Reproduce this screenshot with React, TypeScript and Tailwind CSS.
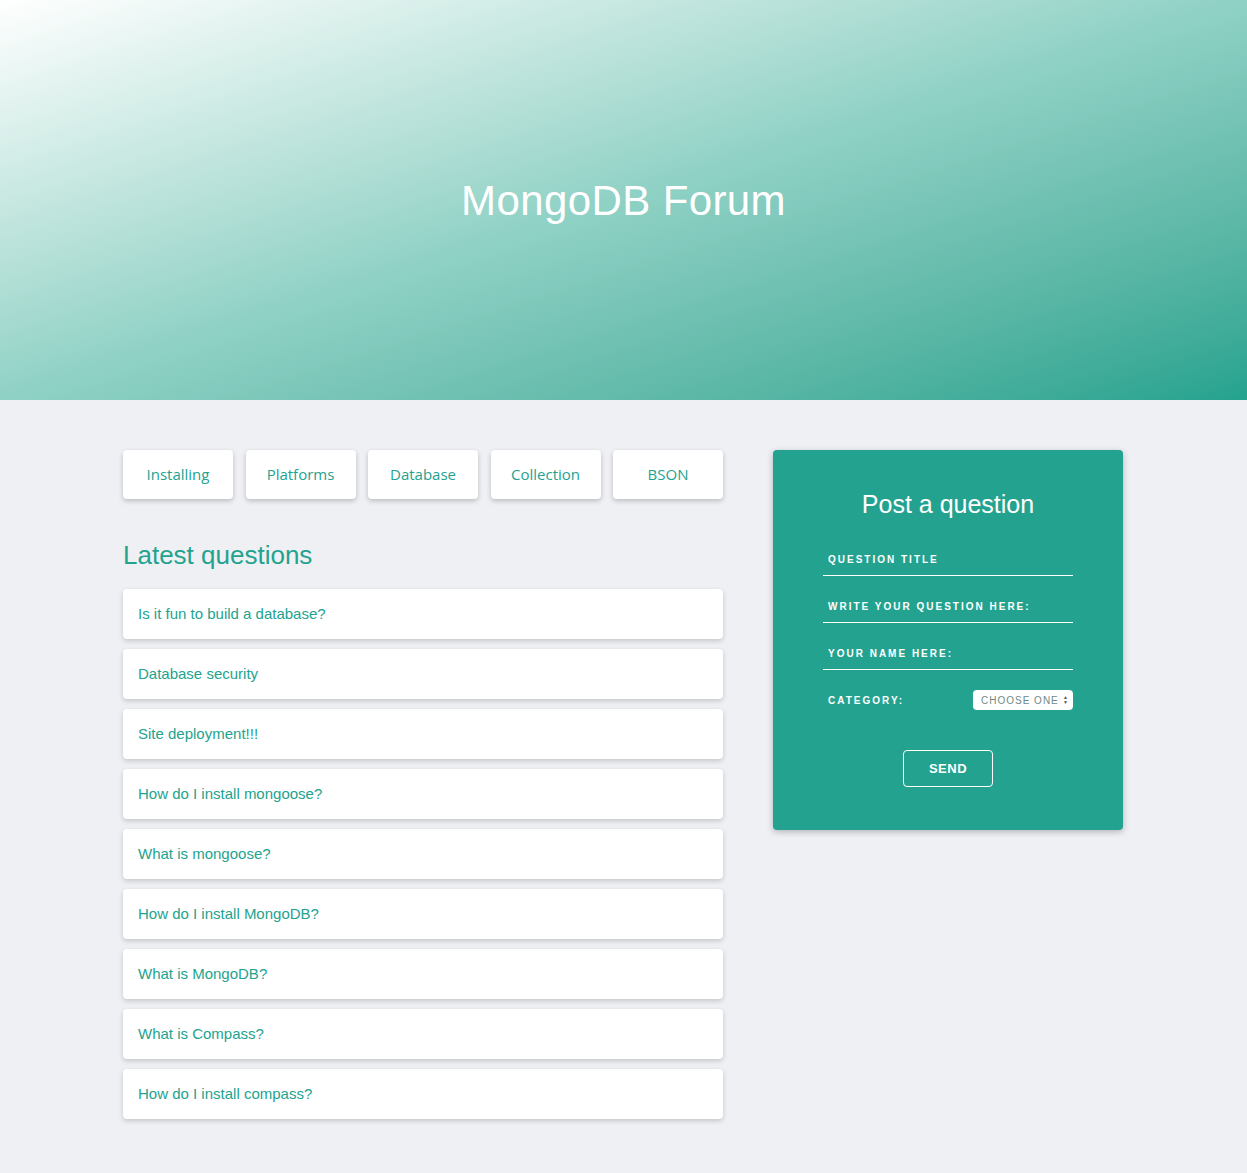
const categories = ["Installing", "Platforms", "Database", "Collection", "BSON"];

const questions = [
  "Is it fun to build a database?",
  "Database security",
  "Site deployment!!!",
  "How do I install mongoose?",
  "What is mongoose?",
  "How do I install MongoDB?",
  "What is MongoDB?",
  "What is Compass?",
  "How do I install compass?",
];

const fields = ["Question title", "Write your question here:", "Your name here:"];

export default function App() {
  return (
    <main className="min-h-screen bg-[#eff0f4] font-['Liberation_Sans',Arial,sans-serif]">
      <header className="flex h-[400px] items-center justify-center bg-gradient-to-br from-white via-[#8fd1c5] to-[#23a38f]">
        <h1 className="text-[42px] font-normal tracking-[0.4px] text-white">MongoDB Forum</h1>
      </header>

      <div className="ml-[123px] flex w-[1000px] gap-[50px] pb-[55px] pt-[50px]">
        <section className="w-[600px]">
          <nav className="flex justify-between">
            {categories.map((c) => (
              <button
                key={c}
                type="button"
                className="h-[49px] w-[110px] rounded-[4px] bg-white font-['Open_Sans',sans-serif] text-[15px] text-[#23a38f] shadow-[0_2px_5px_rgba(0,0,0,0.22)]"
              >
                {c}
              </button>
            ))}
          </nav>

          <h2 className="mt-[41px] text-[26px] font-light leading-[30px] text-[#23a38f]">Latest questions</h2>

          <ul className="mt-[19px] flex flex-col gap-[10px]">
            {questions.map((q) => (
              <li
                key={q}
                className="flex h-[50px] items-center rounded-[4px] bg-white px-[15px] text-[15px] text-[#23a38f] shadow-[0_2px_5px_rgba(0,0,0,0.18)]"
              >
                {q}
              </li>
            ))}
          </ul>
        </section>

        <aside className="h-[380px] w-[350px] rounded-[4px] bg-[#23a38f] px-[50px] pt-[38px] shadow-[0_2px_6px_rgba(0,0,0,0.25)]">
          <h3 className="text-center text-[25px] leading-[32px] text-white">Post a question</h3>
          <form className="mt-[9px] flex flex-col">
            {fields.map((f) => (
              <div
                key={f}
                className="flex h-[47px] items-end border-b border-white px-[5px] pb-[8px] text-[10px] font-bold uppercase tracking-[2px] text-white"
              >
                {f}
              </div>
            ))}
            <div className="mt-[20px] flex items-center justify-between pl-[5px]">
              <span className="text-[10px] font-bold uppercase tracking-[2px] text-white">Category:</span>
              <div className="flex h-[20px] w-[100px] items-center justify-between rounded-[4px] bg-white pl-[8px] pr-[4px] text-[10px] uppercase tracking-[1px] text-[#6e8a86]">
                Choose one
                <span className="flex flex-col text-[5px] leading-[5px] text-[#555]">
                  <span>▲</span>
                  <span>▼</span>
                </span>
              </div>
            </div>
            <button
              type="button"
              className="mx-auto mt-[40px] h-[37px] w-[90px] rounded-[4px] border border-white text-[13px] font-bold uppercase tracking-[0.5px] text-white"
            >
              Send
            </button>
          </form>
        </aside>
      </div>
    </main>
  );
}
